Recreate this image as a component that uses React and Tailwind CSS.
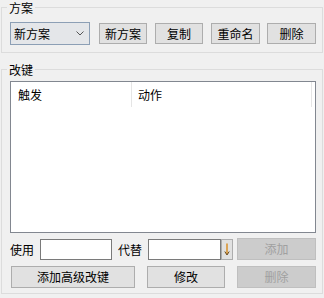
import React from "react";

const font = { fontFamily: '"Noto Sans CJK SC", "Noto Sans", sans-serif' };

function Btn({ children, className = "", disabled = false }) {
  return (
    <div
      className={
        "flex items-center justify-center text-[12px] leading-none " +
        (disabled
          ? "bg-[#cccccc] border border-[#bfbfbf] text-[#a0a0a0] "
          : "bg-[#e1e1e1] border border-[#adadad] text-black ") +
        className
      }
    >
      {children}
    </div>
  );
}

export default function App() {
  return (
    <div
      className="w-[324px] h-[298px] bg-[#f0f0f0] text-[12px] text-black overflow-hidden"
      style={font}
    >
      <fieldset className="ml-[1px] w-[322px] border border-[#dcdcdc] p-0">
        <legend className="ml-[5px] px-[2px] pt-[2px] leading-[12px] text-[12px]">方案</legend>
        <div className="flex items-center pl-[8px] pt-[8px] pb-[7px]">
          <div className="w-[80px] h-[23px] border border-[#8c9fb5] bg-[#e4e6e9] flex items-center justify-between pl-[3px] pr-[5px]">
            <span className="leading-none">新方案</span>
            <svg width="8" height="5" viewBox="0 0 8 5" className="mb-[1px]">
              <path d="M0.5 0.5 L4 4 L7.5 0.5" fill="none" stroke="#555" strokeWidth="1" />
            </svg>
          </div>
          <Btn className="ml-[9px] w-[48px] h-[21px]">新方案</Btn>
          <Btn className="ml-[8px] w-[48px] h-[21px]">复制</Btn>
          <Btn className="ml-[8px] w-[49px] h-[21px]">重命名</Btn>
          <Btn className="ml-[7px] w-[49px] h-[21px]">删除</Btn>
        </div>
      </fieldset>

      <fieldset className="ml-[1px] mt-[9px] w-[322px] border border-[#dcdcdc] p-0">
        <legend className="ml-[5px] px-[2px] pt-[2px] leading-[12px] text-[12px]">改键</legend>
        <div className="pl-[8px] pt-[5px] pb-[5px]">
          <div className="w-[306px] h-[152px] border border-[#828790] bg-white">
            <div className="flex h-[25px] items-center">
              <div className="w-[121px] h-full border-r border-[#e5e5e5] flex items-center pl-[7px]">触发</div>
              <div className="w-[180px] h-full border-r border-[#e5e5e5] flex items-center pl-[6px]">动作</div>
            </div>
          </div>

          <div className="flex items-end h-[22px] mt-[5px]">
            <div className="w-[30px] h-[21px] flex items-center">使用</div>
            <div className="w-[72px] h-[21px] border border-[#7a7a7a] bg-white"></div>
            <div className="ml-[6px] w-[30px] h-[21px] flex items-center">代替</div>
            <div className="w-[73px] h-[21px] border border-[#7a7a7a] bg-white"></div>
            <div className="w-[12px] h-[21px] border border-[#adadad] bg-[#e1e1e1] flex items-center justify-center">
              <svg width="6" height="13" viewBox="0 0 6 13">
                <path d="M3 0.5 L3 11" stroke="#d98a1a" strokeWidth="1.4" />
                <path d="M0.8 8.5 L3 12 L5.2 8.5" fill="none" stroke="#6b4a1a" strokeWidth="1" />
              </svg>
            </div>
            <Btn disabled className="ml-[4px] w-[79px] h-[22px]">添加</Btn>
          </div>

          <div className="flex items-center h-[22px] mt-[6px]">
            <Btn className="ml-[1px] w-[124px] h-[22px]">添加高级改键</Btn>
            <Btn className="ml-[12px] w-[78px] h-[22px]">修改</Btn>
            <Btn disabled className="ml-[12px] w-[79px] h-[22px]">删除</Btn>
          </div>
        </div>
      </fieldset>
    </div>
  );
}
